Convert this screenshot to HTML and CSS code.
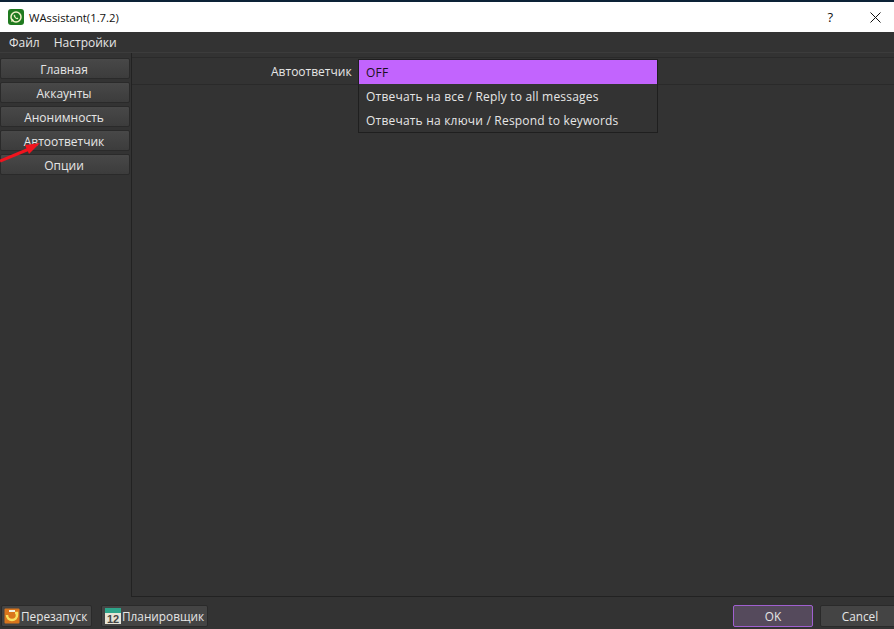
FILE: index.html
```html
<!DOCTYPE html>
<html lang="ru">
<head>
<meta charset="utf-8">
<title>WAssistant</title>
<link rel="stylesheet" href="styles.css">
</head>
<body>
<div class="window">
  <div class="strip"></div>
  <header class="titlebar">
    <svg class="appicon" width="16" height="16" viewBox="0 0 16 16"><rect width="16" height="16" rx="3" fill="#1f7a1f"/><circle cx="8" cy="8" r="5" fill="none" stroke="#f2f2c8" stroke-width="1.5"/><path d="M3 13l1.2-3.500 2 2z" fill="#f2f2c8"/><path d="M6 5.500c-.8 1 .2 3 1.500 3.900s2.400 1 2.900.2l-1.200-1-.7.4c-.6-.3-1-.8-1.300-1.400l.4-.7z" fill="#f2f2c8"/></svg>
    <span class="apptitle">WAssistant(1.7.2)</span>
    <span class="help">?</span>
    <svg class="close" width="11" height="11" viewBox="0 0 11 11"><path d="M.5.5l10 10M10.500.5l-10 10" stroke="#111" stroke-width="1" fill="none"/></svg>
  </header>
  <nav class="menubar"><span>Файл</span><span>Настройки</span></nav>
  <main class="body">
    <aside class="sidebar">
      <div class="tab">Главная</div>
      <div class="tab">Аккаунты</div>
      <div class="tab">Анонимность</div>
      <div class="tab">Автоответчик</div>
      <div class="tab">Опции</div>
      <svg class="arrow" width="42" height="24" viewBox="0 0 42 24"><path d="M0 21L28 9.500" stroke="#f0141e" stroke-width="3" fill="none"/><path d="M40 3L25 5l4 9z" fill="#f0141e"/></svg>
    </aside>
    <section class="panel">
      <div class="row">
        <label class="rowlabel">Автоответчик</label>
        <div class="dropdown">
          <div class="option selected">OFF</div>
          <div class="option">Отвечать на все / Reply to all messages</div>
          <div class="option">Отвечать на ключи / Respond to keywords</div>
        </div>
      </div>
    </section>
  </main>
  <footer class="footer">
    <div class="btn iconbtn restart"><svg width="16" height="18" viewBox="0 0 16 18"><rect x=".5" y="1.500" width="15" height="15" rx="1" fill="#d9751c"/><path d="M3 8a5 5 0 0 0 10 0V6h-2" fill="none" stroke="#f8e060" stroke-width="2.500"/><path d="M5 4h6" stroke="#f0f0e0" stroke-width="2"/></svg>Перезапуск</div>
    <div class="btn iconbtn planner"><svg width="16" height="18" viewBox="0 0 16 18"><rect y="1" width="16" height="16" fill="#e6e4d6"/><rect y="1" width="16" height="5" fill="#2ea58a"/><text x="8" y="16" class="cal">12</text></svg>Планировщик</div>
    <div class="spacer"></div>
    <div class="btn ok">OK</div>
    <div class="btn cancel">Cancel</div>
  </footer>
</div>
</body>
</html>
```
FILE: styles.css
```css
* { box-sizing: border-box; }
html, body { margin: 0; height: 100%; }
body { background: #333; font-family: "Open Sans", "Liberation Sans", sans-serif; font-size: 12px; color: #e6e6e6; overflow: hidden; }
.window { width: 894px; height: 629px; display: flex; flex-direction: column; background: #333; overflow: hidden; }
.strip { height: 2px; background: #0c2236; }
.titlebar { height: 30px; background: #fff; display: flex; align-items: center; padding-left: 8px; color: #111; }
.appicon { flex: none; }
.apptitle { margin-left: 5px; font-size: 11.300px; }
.help { margin-left: auto; font-size: 13px; margin-right: 37px; }
.close { margin-right: 13px; }
.menubar { height: 21px; display: flex; align-items: center; gap: 14px; padding: 0 0 0 9px; border-bottom: 1px solid #3c3c3c; }
.body { flex: 1; display: flex; min-height: 0; }
.sidebar { width: 132px; flex: none; position: relative; display: flex; flex-direction: column; gap: 3px; padding-top: 5px; border-right: 1px solid #222; }
.tab { height: 21px; width: 130px; padding: 1px 2px 0 0; background: linear-gradient(#484848, #3c3c3c); border: 1px solid #2a2a2a; border-radius: 2px; display: flex; align-items: center; justify-content: center; color: #e6e6e6; font-size: 12px; }
.arrow { position: absolute; left: 0; top: 87px; }
.panel { flex: 1; padding-top: 4px; border-bottom: 1px solid #222; }
.row { height: 28px; position: relative; border-top: 1px solid #2a2a2a; border-bottom: 1px solid #2a2a2a; }
.rowlabel { position: absolute; left: 139px; top: 5px; }
.dropdown { position: absolute; left: 226px; top: 1px; width: 300px; background: #333; border: 1px solid #1f1f1f; }
.option { height: 24px; display: flex; align-items: center; padding-left: 7px; color: #e6e6e6; letter-spacing: .2px; }
.selected { background: #c264fe; color: #1a1020; }
.footer { height: 32px; flex: none; display: flex; align-items: flex-start; padding: 8px 2px 0 1px; gap: 9px; font-size: 11.800px; }
.spacer { flex: 1; }
.btn { height: 22px; flex: none; display: flex; align-items: center; border: 1px solid #2a2a2a; border-radius: 2px; background: #444; color: #e6e6e6; }
.iconbtn { gap: 1px; padding: 0 2px; }
.restart { width: 91px; }
.planner { width: 107px; padding-left: 3px; }
.cal { font-size: 11px; font-weight: bold; fill: #444; text-anchor: middle; font-family: "Liberation Sans", sans-serif; }
.ok { width: 80px; justify-content: center; border-color: #a060d0; background: #554a5c; margin-right: -2px; }
.cancel { width: 80px; justify-content: center; margin-right: -8px; }
```
